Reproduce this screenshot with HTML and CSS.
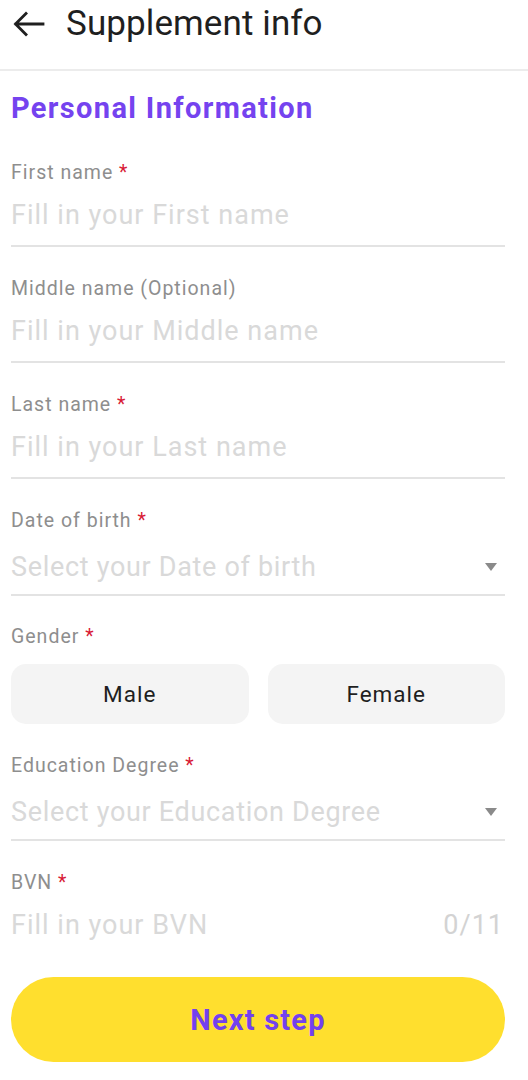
FILE: index.html
```html
<!DOCTYPE html>
<html lang="en">
<head>
<meta charset="utf-8">
<title>Supplement info</title>
<link rel="stylesheet" href="styles.css">
</head>
<body>
<header class="topbar">
  <svg class="back" width="34" height="28" viewBox="0 0 34 28" aria-hidden="true">
    <path d="M31 14 H4 M14 3.5 L3.5 14 L14 24.5" fill="none" stroke="#1f1f1f" stroke-width="2.8" stroke-linecap="square" stroke-linejoin="miter"/>
  </svg>
  <h1 class="title">Supplement info</h1>
</header>
<main class="content">
  <h2 class="section">Personal Information</h2>

  <div class="field first">
    <div class="label">First name <span class="req">*</span></div>
    <div class="input text"><span class="ph">Fill in your First name</span></div>
  </div>

  <div class="field">
    <div class="label">Middle name (Optional)</div>
    <div class="input text"><span class="ph">Fill in your Middle name</span></div>
  </div>

  <div class="field">
    <div class="label">Last name <span class="req">*</span></div>
    <div class="input text"><span class="ph">Fill in your Last name</span></div>
  </div>

  <div class="field">
    <div class="label">Date of birth <span class="req">*</span></div>
    <div class="input select"><span class="ph">Select your Date of birth</span><span class="caret"></span></div>
  </div>

  <div class="field gender">
    <div class="label">Gender <span class="req">*</span></div>
    <div class="choices">
      <div class="choice">Male</div>
      <div class="choice">Female</div>
    </div>
  </div>

  <div class="field edu">
    <div class="label">Education Degree <span class="req">*</span></div>
    <div class="input select"><span class="ph">Select your Education Degree</span><span class="caret"></span></div>
  </div>

  <div class="field">
    <div class="label">BVN <span class="req">*</span></div>
    <div class="input bare"><span class="ph">Fill in your BVN</span><span class="count">0/11</span></div>
  </div>

  <button class="next" type="button">Next step</button>
</main>
</body>
</html>
```
FILE: styles.css
```css
* { box-sizing: border-box; }
html, body { margin: 0; padding: 0; background: #ffffff; }
body {
  width: 528px;
  font-family: Roboto, "Noto Sans", "Liberation Sans", sans-serif;
  color: #1f1f1f;
}
.topbar {
  height: 71px;
  display: flex;
  align-items: flex-start;
  padding: 4px 0 0 12px;
  border-bottom: 2px solid #ececec;
}
.back { margin-top: 6px; flex: none; }
.title {
  margin: 0 0 0 20px;
  font-size: 35px;
  line-height: 40px;
  font-weight: 400;
  letter-spacing: 0.1px;
  color: #1f1f1f;
}
.content { padding: 19px 23px 0 11px; }
.section {
  margin: 0;
  font-size: 29px;
  line-height: 36px;
  font-weight: 700;
  letter-spacing: 1.35px;
  color: #7543ef;
}
.field { margin-top: 30px; }
.field.first { margin-top: 35px; }
.label {
  font-size: 19.5px;
  line-height: 24px;
  letter-spacing: 1px;
  color: #8e8e8e;
}
.req { color: #d81b36; }
.input {
  display: flex;
  align-items: center;
  justify-content: space-between;
  font-size: 27px;
  line-height: 36px;
  letter-spacing: 1px;
  color: #d9d9d9;
}
.input.text {
  margin-top: 12px;
  padding-bottom: 12px;
  border-bottom: 2px solid #e3e3e3;
}
.input.select {
  margin-top: 16px;
  padding-bottom: 9px;
  letter-spacing: 0.68px;
  border-bottom: 2px solid #e3e3e3;
}
.input.bare { margin-top: 12px; }
.caret {
  width: 0; height: 0;
  margin-right: 8px;
  border-left: 6px solid transparent;
  border-right: 6px solid transparent;
  border-top: 8px solid #8a8a8a;
}
.count { color: #d3d3d3; margin-right: 1px; }
.field.gender { margin-top: 29px; }
.choices {
  margin-top: 15px;
  display: grid;
  grid-template-columns: 1fr 1fr;
  gap: 19px;
}
.choice {
  height: 60px;
  border-radius: 15px;
  background: #f4f4f4;
  display: flex;
  align-items: center;
  justify-content: center;
  font-size: 22.5px;
  letter-spacing: 1px;
  color: #1f1f1f;
}
.field.edu { margin-top: 30px; }
.next {
  display: block;
  width: 100%;
  height: 85px;
  margin-top: 34px;
  border: 0;
  border-radius: 43px;
  background: #ffdf2e;
  color: #7341ee;
  font-family: Roboto, "Noto Sans", "Liberation Sans", sans-serif;
  font-size: 29px;
  font-weight: 700;
  letter-spacing: 1.2px;
  padding: 0;
}
```
